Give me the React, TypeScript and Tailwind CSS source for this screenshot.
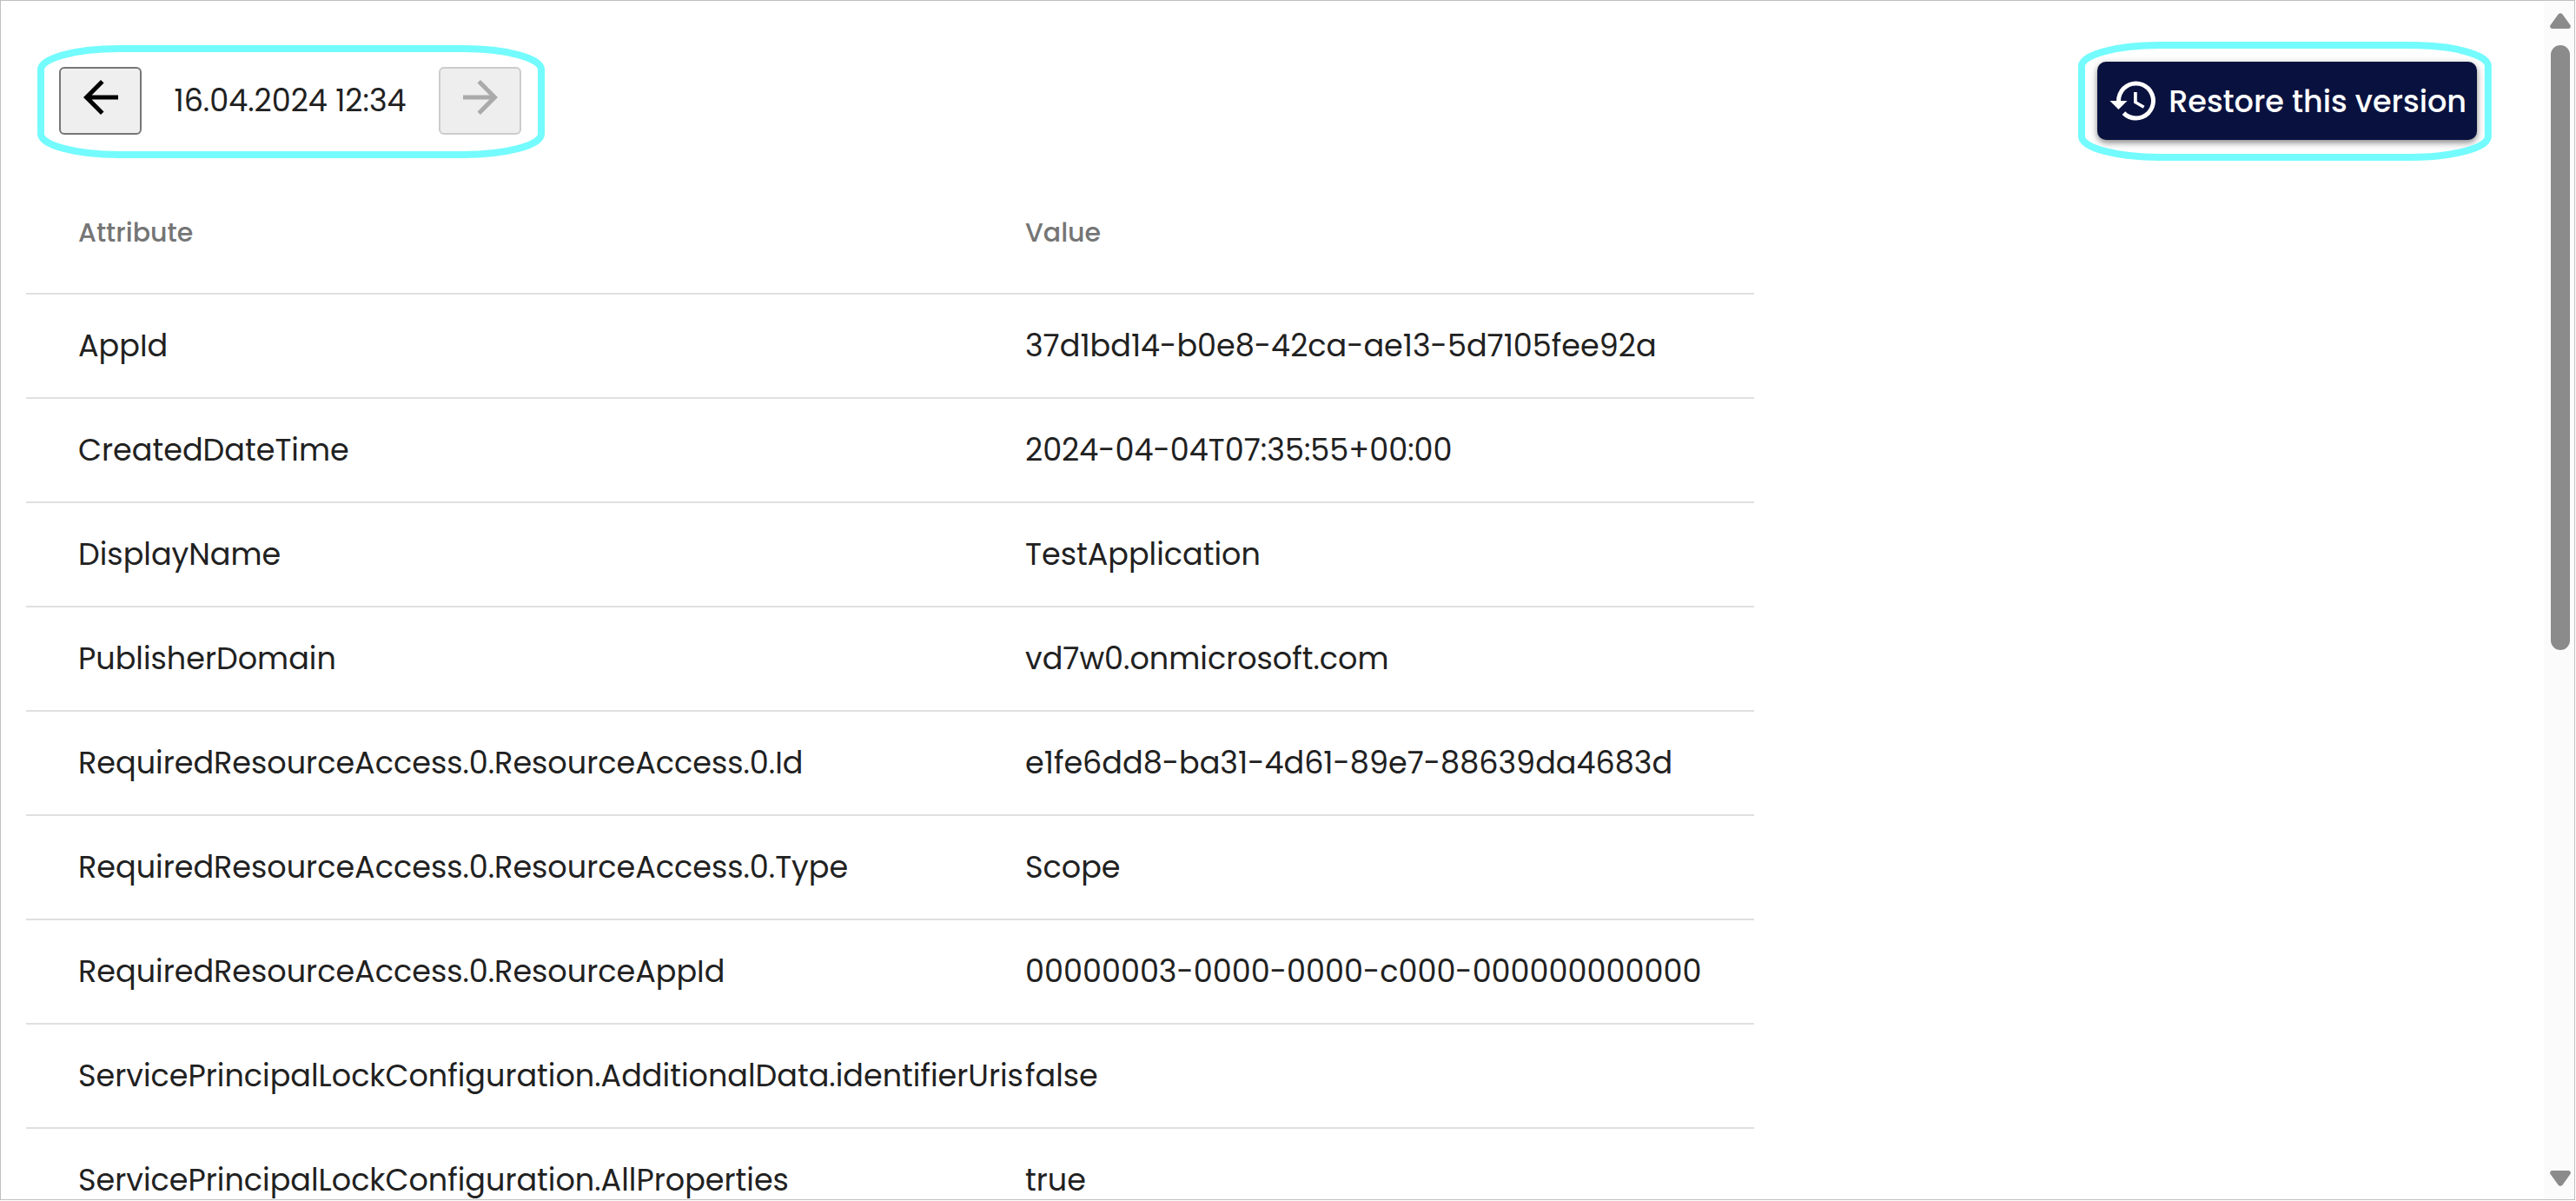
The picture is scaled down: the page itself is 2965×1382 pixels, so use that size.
import type { ReactNode } from 'react';

const attributes = [
  { name: 'AppId', value: '37d1bd14-b0e8-42ca-ae13-5d7105fee92a' },
  { name: 'CreatedDateTime', value: '2024-04-04T07:35:55+00:00' },
  { name: 'DisplayName', value: 'TestApplication' },
  { name: 'PublisherDomain', value: 'vd7w0.onmicrosoft.com' },
  { name: 'RequiredResourceAccess.0.ResourceAccess.0.Id', value: 'e1fe6dd8-ba31-4d61-89e7-88639da4683d' },
  { name: 'RequiredResourceAccess.0.ResourceAccess.0.Type', value: 'Scope' },
  { name: 'RequiredResourceAccess.0.ResourceAppId', value: '00000003-0000-0000-c000-000000000000' },
  { name: 'ServicePrincipalLockConfiguration.AdditionalData.identifierUris', value: 'false' },
  { name: 'ServicePrincipalLockConfiguration.AllProperties', value: 'true' },
];

function Icon({ d }: { d: string }) {
  return (
    <svg viewBox="0 0 24 24" className="size-[60px] shrink-0" fill="currentColor" aria-hidden="true">
      <path d={d} />
    </svg>
  );
}

// Hand-marked ring around the controls
function Highlight({ children }: { children: ReactNode }) {
  return (
    <div className="relative">
      <svg className="pointer-events-none absolute inset-0 size-full" aria-hidden="true">
        <rect
          x="4"
          y="4"
          rx="90"
          ry="24"
          className="h-[calc(100%-8px)] w-[calc(100%-8px)]"
          fill="none"
          stroke="#73fbfd"
          strokeWidth="8"
        />
      </svg>
      {children}
    </div>
  );
}

function VersionNav() {
  return (
    <Highlight>
      <div className="flex items-center pt-[25px] pr-[27px] pb-[27px] pl-[25px]">
        <button
          aria-label="Previous version"
          className="flex w-[95px] justify-center rounded-md border-2 border-[#767676] bg-[#efefef] pt-[3px] pb-[11px] text-black"
        >
          <Icon d="M20 11H7.83l5.59-5.59L12 4l-8 8 8 8 1.41-1.41L7.83 13H20v-2z" />
        </button>
        <span className="min-w-[342px] text-center text-[35px] leading-none">16.04.2024 12:34</span>
        <button
          aria-label="Next version"
          disabled
          className="flex w-[95px] justify-center rounded-md border-2 border-[#cccccc] bg-[#eeeeee] pt-[3px] pb-[11px] text-[#aaaaaa]"
        >
          <Icon d="M12 4l-1.41 1.41L16.17 11H4v2h12.17l-5.58 5.59L12 20l8-8z" />
        </button>
      </div>
    </Highlight>
  );
}

function RestoreButton() {
  return (
    <Highlight>
      <div className="pt-[23px] pr-[17px] pb-6 pl-[22px]">
        <button className="flex h-[90px] items-center gap-2.5 rounded-[10px] bg-[#09123f] px-3 text-[35px] leading-none font-medium whitespace-nowrap text-white shadow-[0_3px_6px_rgba(0,0,0,0.4),0_3px_14px_rgba(0,0,0,0.12)]">
          <Icon d="M13 3a9 9 0 0 0-9 9H1l3.89 3.89.07.14L9 12H6c0-3.87 3.13-7 7-7s7 3.13 7 7-3.13 7-7 7c-1.93 0-3.68-.79-4.94-2.06l-1.42 1.42A8.954 8.954 0 0 0 13 21a9 9 0 0 0 0-18zm-1 5v5l4.28 2.54.72-1.21-3.5-2.08V8H12z" />
          Restore this version
        </button>
      </div>
    </Highlight>
  );
}

function AttributeTable() {
  return (
    <table className="mt-[13px] ml-[29px] w-full max-w-[1989px] table-fixed border-collapse text-left whitespace-nowrap">
      <thead>
        <tr className="h-[140px] border-b-2 border-[#e0e0e0] text-[30px] leading-none text-[#757575]">
          <th className="w-[1150px] pl-[60px] font-medium">Attribute</th>
          <th className="font-medium">Value</th>
        </tr>
      </thead>
      <tbody>
        {attributes.map(({ name, value }) => (
          <tr key={name} className="h-[120px] border-b-2 border-[#e0e0e0] text-[35px] leading-none">
            <td className="pb-0.5 pl-[60px]">{name}</td>
            <td className="pb-0.5">{value}</td>
          </tr>
        ))}
      </tbody>
    </table>
  );
}

function Scrollbar() {
  return (
    <div className="flex w-[35px] shrink-0 flex-col items-center bg-[#fbfbfb] pt-[14px] pb-[15px] pl-[3px] text-[#8b8b8b]">
      <svg viewBox="0 0 24 18" className="h-[18px] w-6" fill="currentColor" aria-hidden="true">
        <path d="M9.5 1.5Q12-1.2 14.5 1.5L23.3 13.8Q25 17.4 21.6 18H2.4Q-1 17.4.7 13.8z" />
      </svg>
      <div className="my-[19px] w-[22px] flex-1">
        <div className="h-6/11 rounded-full bg-[#8b8b8b]" />
      </div>
      <svg viewBox="0 0 24 18" className="h-[18px] w-6" fill="currentColor" aria-hidden="true">
        <path d="M9.5 16.5Q12 19.2 14.5 16.5L23.3 4.2Q25 .6 21.6 0H2.4Q-1 .6.7 4.2z" />
      </svg>
    </div>
  );
}

export default function App() {
  return (
    <div className="h-screen bg-white pr-px pb-px font-['Poppins','Inter',sans-serif] text-[#212121]">
      <div className="flex h-full border border-[#c0c0c0]">
        <main className="min-w-0 flex-1 overflow-hidden">
          <header className="flex items-center justify-between pt-[47px] pr-[60px] pl-[42px]">
            <VersionNav />
            <RestoreButton />
          </header>
          <AttributeTable />
        </main>
        <Scrollbar />
      </div>
    </div>
  );
}
